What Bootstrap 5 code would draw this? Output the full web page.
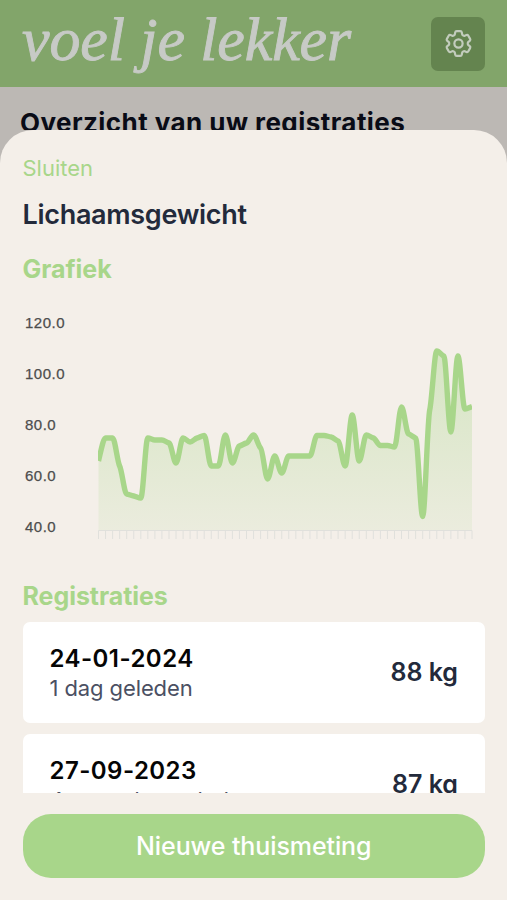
<!DOCTYPE html>
<html lang="nl">
<head>
<meta charset="utf-8">
<meta name="viewport" content="width=device-width, initial-scale=1">
<title>Lichaamsgewicht</title>
<link href="https://cdn.jsdelivr.net/npm/bootstrap@5.3.0/dist/css/bootstrap.min.css" rel="stylesheet">
<style>
  body { height: 900px; background: #bcb8b4; font-family: Inter, "Liberation Sans", sans-serif; color: #232a3b; }
  .topbar { height: 87px; background: #82a56a; padding: 0 22px 0 22px; }
  .brand { font: italic 62px/1 "Liberation Serif", serif; letter-spacing: -.1px; color: #c7cac6; white-space: nowrap; margin-top: -9px; -webkit-text-stroke: .9px #c7cac6; }
  .gear-btn { width: 54px; height: 54px; border-radius: 7px; background: #64844f; color: #c2ccbc; }
  .behind { height: 43px; padding: 18px 20px 0; }
  .behind-title { font-size: 26px; line-height: 36px; font-weight: 700; color: #090b16; white-space: nowrap; letter-spacing: .44px; }
  .sheet { background: #f4efe9; border-radius: 33px 33px 0 0; padding: 0 22px 22px 22.5px; min-height: 0; }
  .close-link { font-size: 22px; line-height: 28px; color: #a8d68a; margin-top: 24px; }
  .sheet-title { font-size: 27px; line-height: 34px; font-weight: 600; margin-top: 16px; letter-spacing: -.3px; }
  .section-title { font-size: 25px; line-height: 32px; font-weight: 700; color: #a8d68a; letter-spacing: -.05px; }
  .section-chart { margin-top: 21px; }
  .section-list { margin-top: 33px; }
  .chart { height: 250px; margin-top: 12px; }
  .axis-label { font: 15px "Liberation Sans", Arial, sans-serif; letter-spacing: .5px; fill: #4d4d4d; stroke: #4d4d4d; stroke-width: .25px; }
  .entries { gap: 11px; margin-top: 10px; height: 171px; }
  .entry { height: 101px; border-radius: 7px; padding: 0 27px; }
  .entry-date { font-size: 24px; line-height: 30px; font-weight: 600; color: #050505; letter-spacing: .45px; }
  .entry-ago { font-size: 22px; line-height: 28px; color: #4b5063; letter-spacing: -.1px; }
  .entry-value { font-size: 25px; font-weight: 600; }
  .new-btn { height: 64px; border-radius: 28px; background: #a8d68a; color: #fff; font-size: 25px; font-weight: 500; letter-spacing: -.1px; padding-top: 2px !important; }
</style>
</head>
<body class="d-flex flex-column overflow-hidden">
<header class="topbar d-flex align-items-center justify-content-between flex-shrink-0">
  <div class="brand">voel je lekker</div>
  <button class="gear-btn btn border-0 p-0 d-flex align-items-center justify-content-center" aria-label="Instellingen">
    <svg width="33" height="33" viewBox="0 0 24 24" fill="none" stroke="currentColor" stroke-width="1.6" stroke-linecap="round" stroke-linejoin="round"><path d="M9.594 3.94c.09-.542.56-.94 1.11-.94h2.593c.55 0 1.02.398 1.11.94l.213 1.281c.063.374.313.686.645.87.074.04.147.083.22.127.325.196.72.257 1.075.124l1.217-.456a1.125 1.125 0 0 1 1.37.49l1.296 2.247a1.125 1.125 0 0 1-.26 1.431l-1.003.827c-.293.241-.438.613-.43.992a7.723 7.723 0 0 1 0 .255c-.008.378.137.75.43.991l1.004.827c.424.35.534.955.26 1.43l-1.298 2.247a1.125 1.125 0 0 1-1.369.491l-1.217-.456c-.355-.133-.75-.072-1.076.124a6.47 6.47 0 0 1-.22.128c-.331.183-.581.495-.644.869l-.213 1.281c-.09.543-.56.94-1.11.94h-2.594c-.55 0-1.019-.398-1.11-.94l-.213-1.281c-.062-.374-.312-.686-.644-.87a6.52 6.52 0 0 1-.22-.127c-.325-.196-.72-.257-1.076-.124l-1.217.456a1.125 1.125 0 0 1-1.369-.49l-1.297-2.247a1.125 1.125 0 0 1 .26-1.431l1.004-.827c.292-.24.437-.613.43-.991a6.932 6.932 0 0 1 0-.255c.007-.38-.138-.751-.43-.992l-1.004-.827a1.125 1.125 0 0 1-.26-1.43l1.297-2.247a1.125 1.125 0 0 1 1.37-.491l1.216.456c.356.133.751.072 1.076-.124.072-.044.146-.086.22-.128.332-.183.582-.495.644-.869l.214-1.28Z"/><circle cx="12" cy="12" r="3"/></svg>
  </button>
</header>
<div class="behind overflow-hidden flex-shrink-0"><div class="behind-title">Overzicht van uw registraties</div></div>
<main class="sheet d-flex flex-column flex-grow-1">
  <div><a href="#" class="close-link d-inline-block text-decoration-none">Sluiten</a></div>
  <h1 class="sheet-title mb-0">Lichaamsgewicht</h1>
  <h2 class="section-title section-chart mb-0">Grafiek</h2>
  <svg class="chart d-block flex-shrink-0" width="462" height="250" viewBox="23 297 462 250">
    <defs><linearGradient id="fade" x1="0" y1="350" x2="0" y2="531" gradientUnits="userSpaceOnUse"><stop offset="0" stop-color="#a8d68a" stop-opacity=".4"/><stop offset="1" stop-color="#a8d68a" stop-opacity=".12"/></linearGradient>
    <clipPath id="plot"><rect x="98" y="320" width="374" height="220"/></clipPath></defs>
    <g class="axis-label">
      <text x="25" y="328">120.0</text><text x="25" y="378.5">100.0</text><text x="25" y="430">80.0</text><text x="25" y="480.5">60.0</text><text x="25" y="531.5">40.0</text>
    </g>
    <path id="area" fill="url(#fade)"/>
    <path id="ticks" fill="none" stroke="#e0e0dc" stroke-width="1"/>
    <path id="line" fill="none" stroke="#a8d68a" stroke-width="5.4" stroke-linejoin="round" clip-path="url(#plot)"/>
  </svg>
  <h2 class="section-title section-list mb-0">Registraties</h2>
  <div class="entries d-flex flex-column overflow-hidden flex-shrink-0">
    <div class="entry bg-white d-flex align-items-center justify-content-between flex-shrink-0">
      <div><div class="entry-date">24-01-2024</div><div class="entry-ago">1 dag geleden</div></div>
      <div class="entry-value">88 kg</div>
    </div>
    <div class="entry bg-white d-flex align-items-center justify-content-between flex-shrink-0">
      <div><div class="entry-date">27-09-2023</div><div class="entry-ago">4 maanden geleden</div></div>
      <div class="entry-value">87 kg</div>
    </div>
  </div>
  <button class="new-btn btn border-0 p-0 w-100 mt-auto flex-shrink-0">Nieuwe thuismeting</button>
</main>
<script src="https://cdn.jsdelivr.net/npm/bootstrap@5.3.0/dist/js/bootstrap.bundle.min.js"></script>
<script>
  // Smooth monotone curve through the weight readings
  const ys = [461,438,438,466,494,496,498,438,440,440,443,463,438,442,438,435.5,466,466,435,463,446,443,435,448,479,456,473,456,456,456,456,435.5,435.5,437,441,466,415,461,435,438,445.5,445.5,447,407,434,438,516.5,410,351,356,432,356,409,406.5];
  const x0 = 98.5, step = 373.5 / 53, n = ys.length;
  const slope = i => (ys[i + 1] - ys[i]) / step;
  const tan = ys.map((_, i) => {
    if (i === 0) return slope(0) * 1.2;
    if (i === n - 1) return slope(n - 2);
    const a = slope(i - 1), b = slope(i);
    return a * b <= 0 ? 0 : Math.sign(a) * Math.min(Math.abs(a), Math.abs(b)) * .5;
  });
  let d = `M${x0} ${ys[0]}`;
  for (let i = 0; i < n - 1; i++) {
    const x = x0 + i * step, k = step / 3;
    d += `C${x + k} ${ys[i] + tan[i] * k} ${x + 2 * k} ${ys[i + 1] - tan[i + 1] * k} ${x + step} ${ys[i + 1]}`;
  }
  document.getElementById('line').setAttribute('d', d);
  document.getElementById('area').setAttribute('d', d + `V531H${x0}Z`);
  let t = `M${x0} 530.5H472`;
  for (let i = 0; i < n; i++) t += `M${x0 + i * step} 530.5v8.5`;
  document.getElementById('ticks').setAttribute('d', t);
</script>
</body>
</html>
